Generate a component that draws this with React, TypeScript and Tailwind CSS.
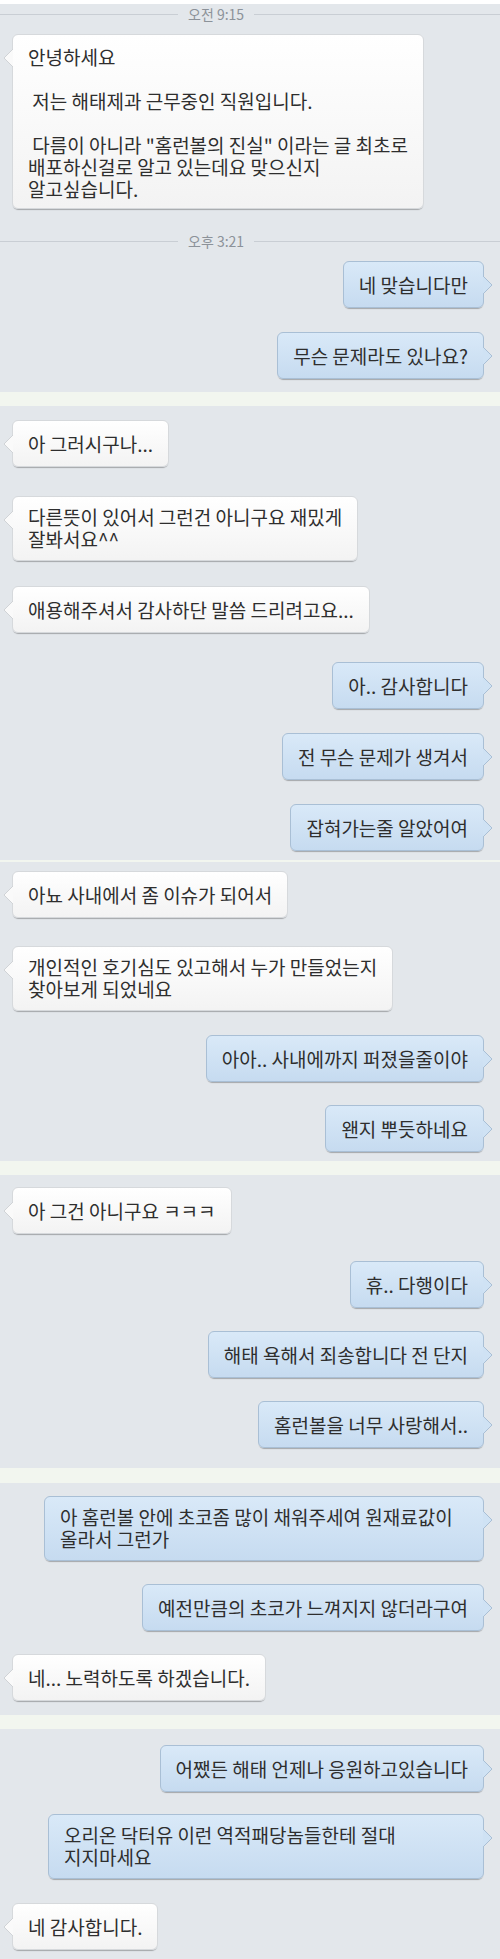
type Item =
  | { kind: "ts"; text: string; mt: string }
  | { kind: "band"; cls: string }
  | { kind: "msg"; side: "in" | "out"; text: string; mt: string; pad: string; w?: string };

const ONE = "pt-[12px] pb-[11px]";
const TWO = "pt-[9px] pb-[10px]";

const CHAT: Item[] = [
  { kind: "ts", text: "오전 9:15", mt: "mt-[4px]" },
  {
    kind: "msg",
    side: "in",
    mt: "mt-[10px]",
    pad: "pt-[11px] pb-[8px]",
    text:
      '안녕하세요\n\n 저는 해태제과 근무중인 직원입니다.\n\n 다름이 아니라 "홈런볼의 진실" 이라는 글 최초로\n배포하신걸로 알고 있는데요 맞으신지\n알고싶습니다.',
  },
  { kind: "ts", text: "오후 3:21", mt: "mt-[22px]" },
  { kind: "msg", side: "out", mt: "mt-[10px]", pad: ONE, text: "네 맞습니다만" },
  { kind: "msg", side: "out", mt: "mt-[24px]", pad: ONE, text: "무슨 문제라도 있나요?" },
  { kind: "band", cls: "mt-[13px] h-[14px]" },
  { kind: "msg", side: "in", mt: "mt-[14px]", pad: ONE, text: "아 그러시구나..." },
  {
    kind: "msg",
    side: "in",
    mt: "mt-[29px]",
    pad: TWO,
    text: "다른뜻이 있어서 그런건 아니구요 재밌게\n잘봐서요^^",
  },
  { kind: "msg", side: "in", mt: "mt-[25px]", pad: ONE, text: "애용해주셔서 감사하단 말씀 드리려고요..." },
  { kind: "msg", side: "out", mt: "mt-[29px]", pad: ONE, text: "아.. 감사합니다" },
  { kind: "msg", side: "out", mt: "mt-[24px]", pad: ONE, text: "전 무슨 문제가 생겨서" },
  { kind: "msg", side: "out", mt: "mt-[24px]", pad: ONE, text: "잡혀가는줄 알았어여" },
  { kind: "band", cls: "mt-[9px] h-[2px]" },
  { kind: "msg", side: "in", mt: "mt-[9px]", pad: ONE, text: "아뇨 사내에서 좀 이슈가 되어서" },
  {
    kind: "msg",
    side: "in",
    mt: "mt-[28px]",
    pad: TWO,
    text: "개인적인 호기심도 있고해서 누가 만들었는지\n찾아보게 되었네요",
  },
  { kind: "msg", side: "out", mt: "mt-[24px]", pad: ONE, text: "아아.. 사내에까지 퍼졌을줄이야" },
  { kind: "msg", side: "out", mt: "mt-[23px]", pad: ONE, text: "왠지 뿌듯하네요" },
  { kind: "band", cls: "mt-[9px] h-[14px]" },
  { kind: "msg", side: "in", mt: "mt-[12px]", pad: ONE, text: "아 그건 아니구요 ㅋㅋㅋ" },
  { kind: "msg", side: "out", mt: "mt-[27px]", pad: ONE, text: "휴.. 다행이다" },
  { kind: "msg", side: "out", mt: "mt-[23px]", pad: ONE, text: "해태 욕해서 죄송합니다 전 단지" },
  { kind: "msg", side: "out", mt: "mt-[23px]", pad: ONE, text: "홈런볼을 너무 사랑해서.." },
  { kind: "band", cls: "mt-[20px] h-[15px]" },
  {
    kind: "msg",
    side: "out",
    mt: "mt-[13px]",
    pad: TWO,
    w: "w-[440px]",
    text: "아 홈런볼 안에 초코좀 많이 채워주세여 원재료값이\n올라서 그런가",
  },
  { kind: "msg", side: "out", mt: "mt-[23px]", pad: ONE, text: "예전만큼의 초코가 느껴지지 않더라구여" },
  { kind: "msg", side: "in", mt: "mt-[23px]", pad: ONE, text: "네... 노력하도록 하겠습니다." },
  { kind: "band", cls: "mt-[14px] h-[14px]" },
  { kind: "msg", side: "out", mt: "mt-[16px]", pad: ONE, text: "어쨌든 해태 언제나 응원하고있습니다" },
  {
    kind: "msg",
    side: "out",
    mt: "mt-[22px]",
    pad: TWO,
    w: "w-[436px]",
    text: "오리온 닥터유 이런 역적패당놈들한테 절대\n지지마세요",
  },
  { kind: "msg", side: "in", mt: "mt-[24px]", pad: ONE, text: "네 감사합니다." },
];

function TimeStamp({ text, mt }: { text: string; mt: string }) {
  return (
    <div className={`flex h-[20px] items-center ${mt}`}>
      <div className="h-px w-[178px] bg-[#c9ced4]" />
      <span className="px-[10px] text-[14px] leading-none text-[#8c9299]">{text}</span>
      <div className="h-px flex-1 bg-[#c9ced4]" />
    </div>
  );
}

function Bubble({
  side,
  text,
  mt,
  pad,
  w = "",
}: {
  side: "in" | "out";
  text: string;
  mt: string;
  pad: string;
  w?: string;
}) {
  const out = side === "out";
  return (
    <div className={`flex ${out ? "justify-end pr-[16px]" : "justify-start pl-[12px]"} ${mt}`}>
      <div
        className={`relative whitespace-pre rounded-[6px] border px-[15px] ${w} ${pad} text-[19px] leading-[22px] text-[#2e2e2e] shadow-[0_2px_1px_-1px_rgba(0,0,0,0.28)] ${
          out
            ? "border-[#a9bfd5] bg-linear-to-b from-[#d9e9f8] to-[#c6dbf0]"
            : "border-[#d6d9dc] bg-linear-to-b from-white to-[#f3f3f3]"
        }`}
      >
        {text}
        {out ? (
          <svg className="absolute -right-[10px] top-[14px]" width="10" height="18" viewBox="0 0 10 18">
            <path d="M0 0 L9 9 L0 18 Z" fill="#cfe2f4" />
            <path d="M0 0 L9 9 L0 18" fill="none" stroke="#a9bfd5" strokeWidth="1" />
          </svg>
        ) : (
          <svg className="absolute -left-[10px] top-[14px]" width="10" height="18" viewBox="0 0 10 18">
            <path d="M10 0 L1 9 L10 18 Z" fill="#fafafa" />
            <path d="M10 0 L1 9 L10 18" fill="none" stroke="#d0d3d6" strokeWidth="1" />
          </svg>
        )}
      </div>
    </div>
  );
}

export default function App() {
  return (
    <div className="min-h-[1959px] w-[500px] bg-[#e3e7eb] pb-[16px] font-['Noto_Sans_CJK_KR','Noto_Sans',sans-serif]">
      {CHAT.map((item, i) => {
        if (item.kind === "ts") return <TimeStamp key={i} text={item.text} mt={item.mt} />;
        if (item.kind === "band") return <div key={i} className={`bg-[#f2f6ef] ${item.cls}`} />;
        return <Bubble key={i} side={item.side} text={item.text} mt={item.mt} pad={item.pad} w={item.w} />;
      })}
    </div>
  );
}
